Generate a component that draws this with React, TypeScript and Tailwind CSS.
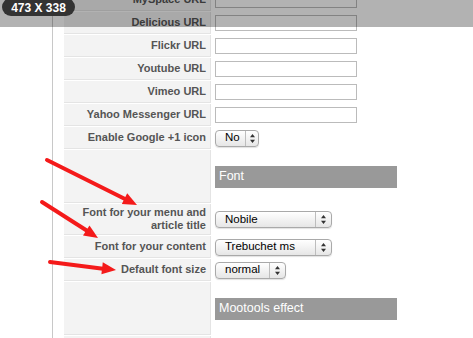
import type { ReactNode } from 'react'

// one row of the settings table: grey label cell + field cell
function Row({ label, h = 'h-[22px]', children }: { label: ReactNode; h?: string; children?: ReactNode }) {
    return (
        <div className="flex">
            <div className={`${h} w-[147px] shrink-0 flex items-center justify-end pr-[4px] text-right text-[11px] leading-[13px] font-bold text-[#555] bg-[#f3f3f3] border-b border-r border-[#e4e4e4]`}>
                {label}
            </div>
            <div className="flex items-center pl-[4px]">{children}</div>
        </div>
    )
}

function TextInput() {
    return <div className="h-[16px] w-[142px] border border-[#bbb] bg-white" />
}

function Select({ value, width, split }: { value: string; width: string; split: string }) {
    return (
        <div className={`${width} h-[17px] flex items-center rounded-[4px] border border-[#a9a9a9] bg-gradient-to-b from-white to-[#e6e6e6] shadow-[0_1px_1px_rgba(0,0,0,0.12)] text-[11.5px] text-black`}>
            <span className={`${split} pl-[9px] h-full flex items-center border-r border-[#bdbdbd]`}>{value}</span>
            <span className="flex-1 flex items-center justify-center">
                <svg width="5" height="9" viewBox="0 0 5 9">
                    <path d="M2.5 0 L5 3.2 L0 3.2 Z M2.5 9 L5 5.8 L0 5.8 Z" fill="#333" />
                </svg>
            </span>
        </div>
    )
}

function HeaderBar({ title }: { title: string }) {
    return (
        <div className="h-[22px] w-[182px] flex items-center pl-[4px] bg-[#999] text-white text-[12.5px]">
            {title}
        </div>
    )
}

export default function App() {
    return (
        <div className="relative h-[338px] w-[473px] overflow-hidden bg-white font-['Liberation_Sans',Arial,sans-serif]">
            <div className="flex h-full">
                <div className="w-[53px] shrink-0 border-r border-[#c8c8c8]" />
                <div className="ml-[11px] -mt-[11px] flex flex-col gap-px">
                    <Row label="MySpace URL"><TextInput /></Row>
                    <Row label="Delicious URL"><TextInput /></Row>
                    <Row label="Flickr URL"><TextInput /></Row>
                    <Row label="Youtube URL"><TextInput /></Row>
                    <Row label="Vimeo URL"><TextInput /></Row>
                    <Row label="Yahoo Messenger URL"><TextInput /></Row>
                    <Row label="Enable Google +1 icon">
                        <Select value="No" width="w-[44px]" split="w-[30px]" />
                    </Row>
                    <Row label="" h="h-[53px]"><HeaderBar title="Font" /></Row>
                    <Row label={<span>Font for your menu and<br />article title</span>} h="h-[31px]">
                        <Select value="Nobile" width="w-[117px]" split="w-[100px]" />
                    </Row>
                    <Row label="Font for your content">
                        <Select value="Trebuchet ms" width="w-[117px]" split="w-[100px]" />
                    </Row>
                    <Row label="Default font size">
                        <Select value="normal" width="w-[71px]" split="w-[54px]" />
                    </Row>
                    <Row label="" h="h-[53px]"><HeaderBar title="Mootools effect" /></Row>
                    <Row label="" />
                </div>
            </div>

            {/* red annotation arrows */}
            <svg className="absolute inset-0 pointer-events-none" width="473" height="338">
                <g stroke="#f41a1a" strokeWidth="4" strokeLinecap="round">
                    <line x1="47" y1="160" x2="127" y2="200" />
                    <line x1="42" y1="202" x2="89" y2="232" />
                    <line x1="50" y1="262" x2="105" y2="269" />
                </g>
                <g fill="#f41a1a">
                    <polygon points="137,205 121.8,204.1 127.2,193.3" />
                    <polygon points="98,238 83,235.5 89.5,225.4" />
                    <polygon points="116,270 101.4,274.3 102.8,262.3" />
                </g>
            </svg>

            {/* screenshot tool overlay */}
            <div className="absolute left-0 top-0 h-[27px] w-full bg-black/30" />
            <div className="absolute left-[2px] -top-[2px] h-[18px] w-[73px] rounded-[9px] bg-[#333] flex items-center justify-center pt-[2px] text-white text-[12px] font-bold">
                473 X 338
            </div>
        </div>
    )
}
